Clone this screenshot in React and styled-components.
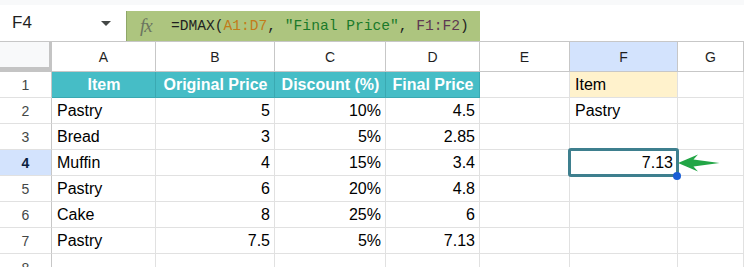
import React from 'react'
import styled, { createGlobalStyle } from 'styled-components'

const GlobalStyle = createGlobalStyle`
  body {
    margin: 0;
    background: #ffffff;
    font-family: 'Liberation Sans', Arial, sans-serif;
    overflow: hidden;
  }
`

const COLS = ['A', 'B', 'C', 'D', 'E', 'F', 'G']

const rows = [
  ['Item', 'Original Price', 'Discount (%)', 'Final Price', '', 'Item', ''],
  ['Pastry', '5', '10%', '4.5', '', 'Pastry', ''],
  ['Bread', '3', '5%', '2.85', '', '', ''],
  ['Muffin', '4', '15%', '3.4', '', '7.13', ''],
  ['Pastry', '6', '20%', '4.8', '', '', ''],
  ['Cake', '8', '25%', '6', '', '', ''],
  ['Pastry', '7.5', '5%', '7.13', '', '', ''],
  ['', '', '', '', '', '', ''],
]

const Page = styled.div`
  width: 744px;
  height: 267px;
  overflow: hidden;
`

const TopStrip = styled.div`
  height: 5px;
  background: #f8f9fa;
`

const FormulaBar = styled.div`
  display: flex;
  height: 36px;
  align-items: stretch;
`

const NameBox = styled.div`
  width: 126px;
  box-sizing: border-box;
  display: flex;
  align-items: center;
  justify-content: space-between;
  padding: 0 15px 0 12px;
  font-size: 17px;
  color: #1f1f1f;
`

const Caret = styled.span`
  width: 0;
  height: 0;
  border-left: 5px solid transparent;
  border-right: 5px solid transparent;
  border-top: 5px solid #444746;
`

const FormulaBox = styled.div`
  width: 354px;
  margin-top: 6px;
  display: flex;
  align-items: center;
  background: #adc57f;
  border-left: 1px solid #8fa768;
  box-sizing: border-box;
`

const Fx = styled.span`
  width: 44px;
  padding-left: 13px;
  box-sizing: border-box;
  font-family: 'Liberation Serif', 'Times New Roman', serif;
  font-style: italic;
  font-size: 19px;
  color: #6b7560;
  letter-spacing: -1px;
`

const Formula = styled.span`
  font-family: 'Liberation Mono', 'Courier New', monospace;
  font-size: 14.6px;
  color: #1f1f1f;
  white-space: pre;
`

const Tok = styled.span`
  color: ${({ $c }) => $c};
`

const Grid = styled.div`
  display: grid;
  grid-template-columns: 52px 104px 119px 111px 94px 90px 108px 66px;
  grid-template-rows: 30px repeat(8, 26px);
  border-top: 1px solid #c7c7c7;
`

const Corner = styled.div`
  background: #f8f9fa;
  border-right: 4px solid #c4c4c4;
  border-bottom: 5px solid #c4c4c4;
  margin-right: -1px;
`

const ColHead = styled.div`
  display: flex;
  align-items: center;
  justify-content: center;
  font-size: 14px;
  color: #1f1f1f;
  background: ${({ $active }) => ($active ? '#d3e3fd' : '#ffffff')};
  border-right: 1px solid #c7c7c7;
  border-bottom: 1px solid #c7c7c7;
`

const RowHead = styled.div`
  display: flex;
  align-items: ${({ $cut }) => ($cut ? 'flex-start' : 'center')};
  padding-top: ${({ $cut }) => ($cut ? '6px' : '0')};
  justify-content: center;
  font-size: 14px;
  font-weight: ${({ $active }) => ($active ? 700 : 400)};
  color: ${({ $active }) => ($active ? '#0b1f3f' : '#444746')};
  background: ${({ $active }) => ($active ? '#d3e3fd' : '#ffffff')};
  border-right: 1px solid #c7c7c7;
  border-bottom: 1px solid #e1e1e1;
`

const Cell = styled.div`
  position: relative;
  z-index: ${({ $selected }) => ($selected ? 2 : 'auto')};
  display: flex;
  align-items: center;
  justify-content: ${({ $align }) => $align};
  padding: 0 4px 0 5px;
  font-size: 16px;
  font-weight: ${({ $bold }) => ($bold ? 700 : 400)};
  color: ${({ $color }) => $color};
  background: ${({ $bg }) => $bg};
  border-right: 1px solid ${({ $line }) => $line};
  border-bottom: 1px solid ${({ $line }) => $line};
  white-space: nowrap;
`

const Selection = styled.div`
  position: absolute;
  left: -2px;
  top: -2px;
  right: -2px;
  bottom: -2px;
  border: 3px solid #3e7f8e;
  border-radius: 3px;
  pointer-events: none;
`

const Handle = styled.div`
  position: absolute;
  right: -4px;
  bottom: -5px;
  width: 8px;
  height: 8px;
  border-radius: 50%;
  background: #1a5fd6;
`

const Arrow = styled.svg`
  position: absolute;
  left: calc(100% + 1px);
  top: 3px;
`

function ArrowIcon() {
  return (
    <Arrow width="44" height="20" viewBox="0 0 44 20">
      <path d="M0 10 L20 1.5 L15.5 6.5 L41.5 10 L15.5 13.5 L20 18.5 Z" fill="#22a646" />
    </Arrow>
  )
}

function cellProps(r, c, val) {
  const header = r === 0 && c < 4
  const numeric = r > 0 && val !== '' && c !== 0 && !(c === 5 && r === 1)
  return {
    $align: header ? 'center' : numeric ? 'flex-end' : 'flex-start',
    $bold: header,
    $color: header ? '#ffffff' : '#000000',
    $bg: header ? '#46bdc6' : r === 0 && c === 5 ? '#fff2cc' : '#ffffff',
    $line: header ? '#3aa9b2' : '#e1e1e1',
    $selected: r === 3 && c === 5,
  }
}

export default function App() {
  return (
    <Page>
      <GlobalStyle />
      <TopStrip />
      <FormulaBar>
        <NameBox>
          F4
          <Caret />
        </NameBox>
        <FormulaBox>
          <Fx>fx</Fx>
          <Formula>
            =DMAX(<Tok $c="#c27c1a">A1:D7</Tok>, <Tok $c="#1a7a2a">"Final Price"</Tok>,{' '}
            <Tok $c="#5e3a52">F1:F2</Tok>)
          </Formula>
        </FormulaBox>
      </FormulaBar>
      <Grid>
        <Corner />
        {COLS.map(col => (
          <ColHead key={col} $active={col === 'F'}>
            {col}
          </ColHead>
        ))}
        {rows.map((row, r) => (
          <React.Fragment key={r}>
            <RowHead $active={r === 3} $cut={r === 7}>
              {r + 1}
            </RowHead>
            {row.map((val, c) => {
              const props = cellProps(r, c, val)
              return (
                <Cell key={c} {...props}>
                  {val}
                  {props.$selected && (
                    <>
                      <Selection />
                      <Handle />
                      <ArrowIcon />
                    </>
                  )}
                </Cell>
              )
            })}
          </React.Fragment>
        ))}
      </Grid>
    </Page>
  )
}
